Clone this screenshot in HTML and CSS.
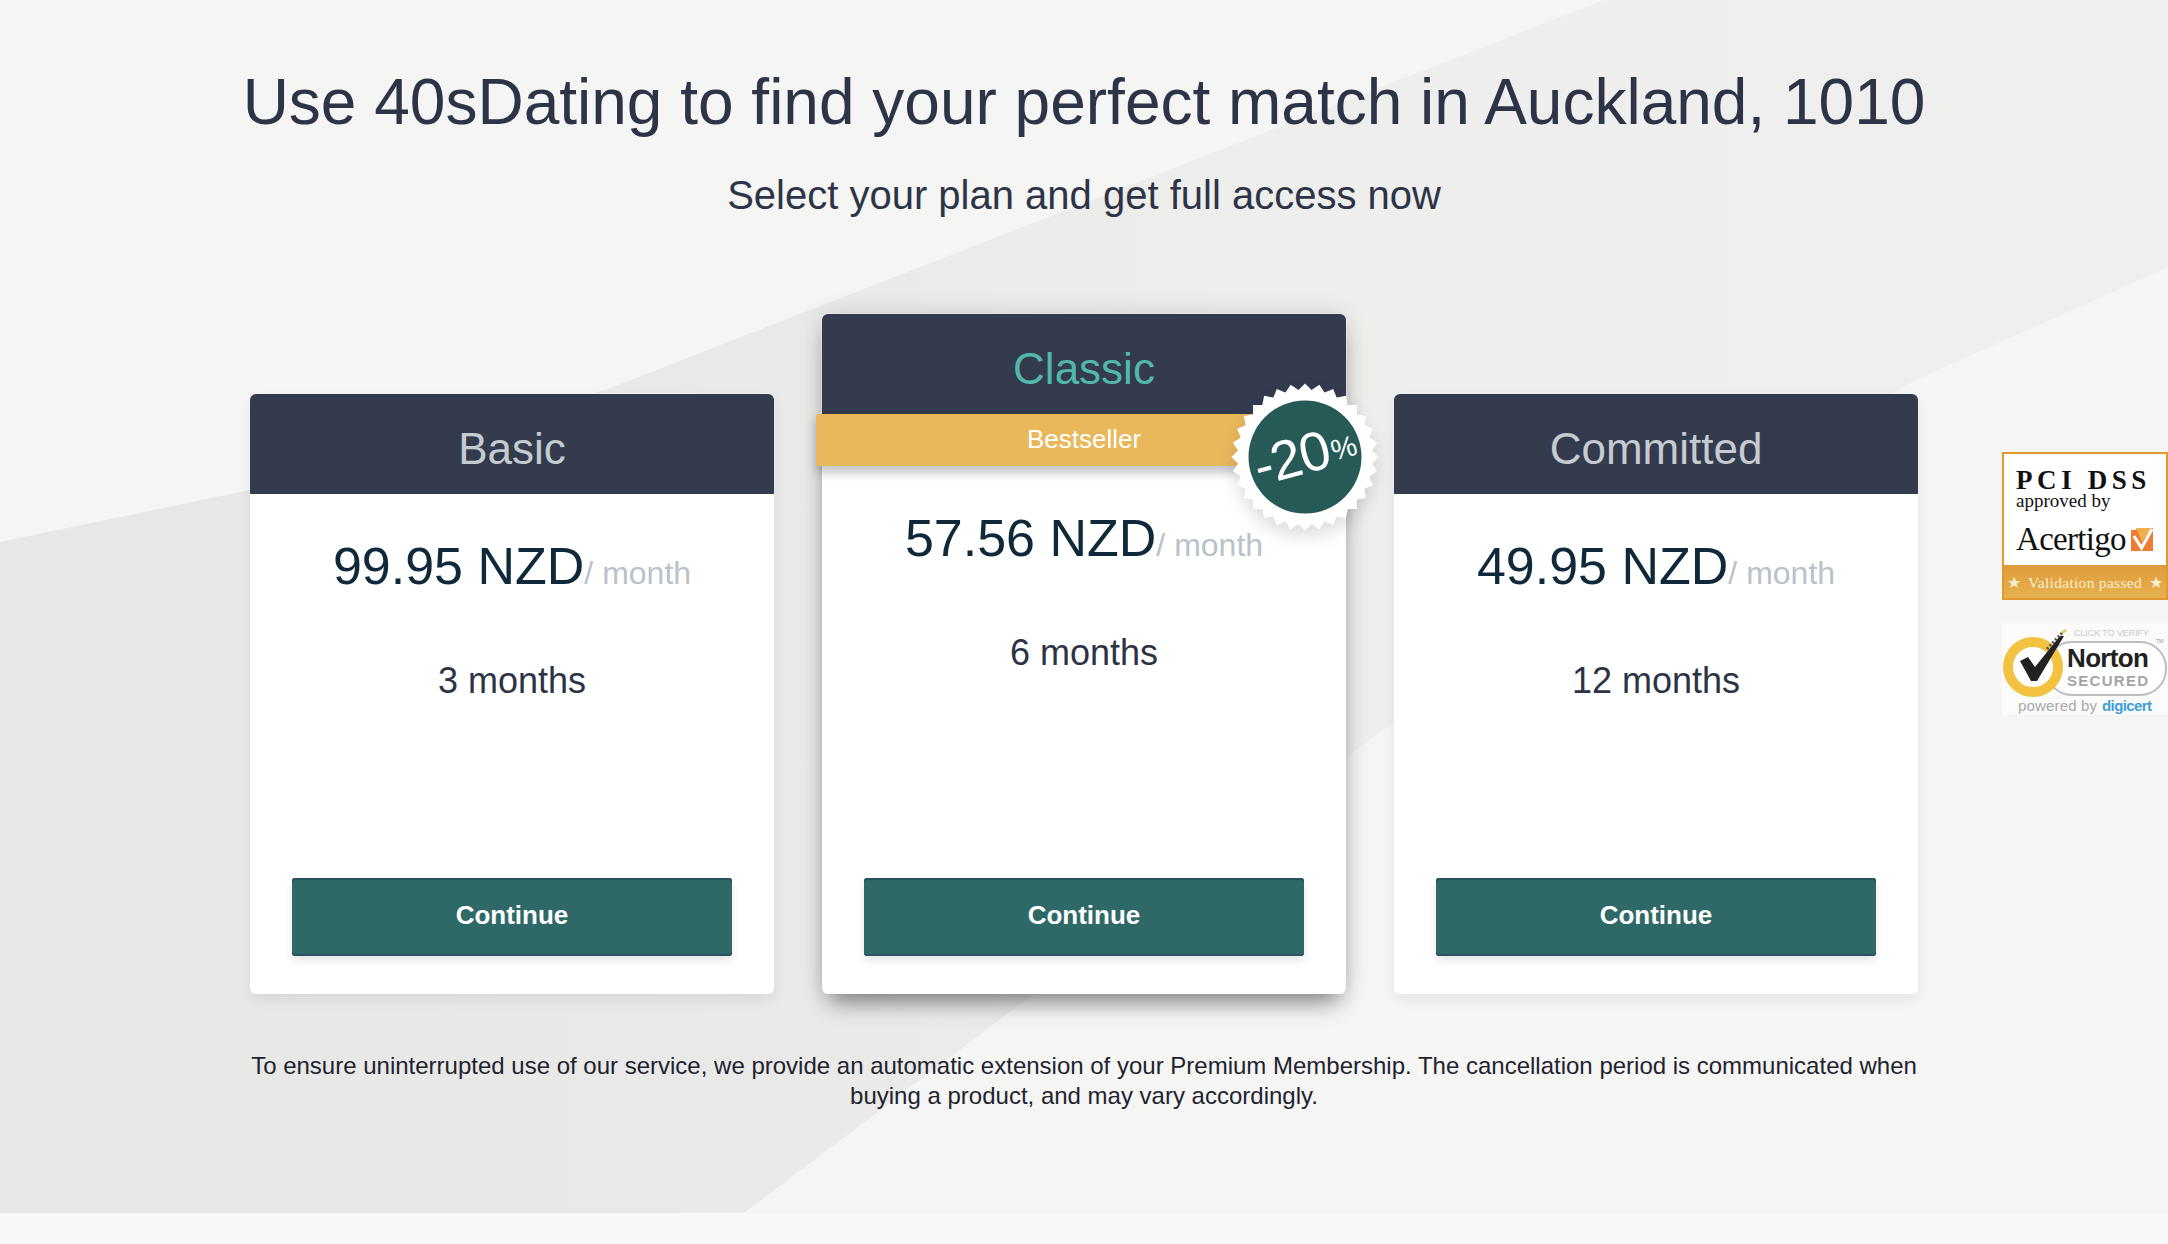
FILE: index.html
```html
<!DOCTYPE html>
<html lang="en">
<head>
<meta charset="utf-8">
<title>40sDating plans</title>
<link rel="stylesheet" href="styles.css">
</head>
<body>
<div class="hero">
  <main class="main">
    <h1 class="title">Use 40sDating to find your perfect match in Auckland, 1010</h1>
    <p class="subtitle">Select your plan and get full access now</p>
    <div class="plans">
      <section class="card">
        <header class="card-head"><h2 class="plan-name">Basic</h2></header>
        <div class="card-body">
          <p class="price"><span class="amount">99.95 NZD</span><span class="per">/ month</span></p>
          <p class="term">3 months</p>
          <button class="cta">Continue</button>
        </div>
      </section>
      <section class="card card-featured">
        <header class="card-head"><h2 class="plan-name plan-name-featured">Classic</h2></header>
        <div class="ribbon">Bestseller</div>
        <div class="burst">
          <svg class="burst-art" viewBox="-74 -74 148 148" aria-hidden="true">
            <g fill="#fff">
              <rect x="-52" y="-52" width="104" height="104"/>
              <rect x="-52" y="-52" width="104" height="104" transform="rotate(11.25)"/>
              <rect x="-52" y="-52" width="104" height="104" transform="rotate(22.5)"/>
              <rect x="-52" y="-52" width="104" height="104" transform="rotate(33.75)"/>
              <rect x="-52" y="-52" width="104" height="104" transform="rotate(45)"/>
              <rect x="-52" y="-52" width="104" height="104" transform="rotate(56.25)"/>
              <rect x="-52" y="-52" width="104" height="104" transform="rotate(67.5)"/>
              <rect x="-52" y="-52" width="104" height="104" transform="rotate(78.75)"/>
            </g>
            <circle r="56.5" fill="#265a56"/>
          </svg>
          <span class="burst-text">-20<small class="burst-pct">%</small></span>
        </div>
        <div class="card-body">
          <p class="price"><span class="amount">57.56 NZD</span><span class="per">/ month</span></p>
          <p class="term">6 months</p>
          <button class="cta">Continue</button>
        </div>
      </section>
      <section class="card">
        <header class="card-head"><h2 class="plan-name">Committed</h2></header>
        <div class="card-body">
          <p class="price"><span class="amount">49.95 NZD</span><span class="per">/ month</span></p>
          <p class="term">12 months</p>
          <button class="cta">Continue</button>
        </div>
      </section>
    </div>
    <p class="note">To ensure uninterrupted use of our service, we provide an automatic extension of your Premium Membership. The cancellation period is communicated when buying a product, and may vary accordingly.</p>
  </main>
  <aside class="seals">
    <div class="pci">
      <div class="pci-body">
        <div class="pci-title">PCI DSS</div>
        <div class="pci-by">approved by</div>
        <div class="pci-brand">
          <span>Acertigo</span>
          <svg class="pci-mark" viewBox="0 0 22 23" aria-hidden="true">
            <path d="M0 0H22L11 17L5 6V0Z" fill="#f0b04a"/>
            <path d="M0 2H6L11 14L20 0H22V23H0Z" fill="#ee7d33"/>
            <path d="M3 8L10.500 20L21 1" fill="none" stroke="#fff" stroke-width="3.200"/>
          </svg>
        </div>
      </div>
      <div class="pci-foot"><span>★</span><span>Validation passed</span><span>★</span></div>
    </div>
    <svg class="norton" viewBox="0 0 166 92">
      <rect x="44" y="19" width="120" height="53" rx="26" fill="#fff" stroke="#bdbdbd" stroke-width="2"/>
      <text class="n-click" x="72" y="13" textLength="75">CLICK TO VERIFY</text>
      <text class="n-tm" x="154" y="20">TM</text>
      <circle cx="31" cy="44" r="25" fill="#fff" stroke="#f3c241" stroke-width="10"/>
      <path d="M18 38L26 34L33 44L58 13L62 13L35 58L29 58Z" fill="#222"/>
      <path d="M45 26L60 10" fill="none" stroke="#555" stroke-width="3" stroke-dasharray="2 2"/>
      <path d="M60 10L64 7" fill="none" stroke="#e9c24e" stroke-width="2.500"/>
      <text class="n-name" x="65" y="44" textLength="82">Norton</text>
      <text class="n-sec" x="65" y="63" textLength="81">SECURED</text>
      <text class="n-pow" x="16" y="88" textLength="79">powered by</text>
      <text class="n-digi" x="100" y="88" textLength="50">digicert</text>
    </svg>
  </aside>
</div>
<div class="strip"></div>
</body>
</html>
```
FILE: styles.css
```css
* { box-sizing: border-box; }
html, body { margin: 0; padding: 0; }
body { font-family: "Liberation Sans", Arial, sans-serif; background: #f7f9f8; color: #2c3345; height: 1244px; overflow: hidden; }
h1, h2, p { margin: 0; font-weight: 400; }

.hero {
  position: relative;
  isolation: isolate;
  height: 1213px;
  background: #f5f5f3;
  display: grid;
  grid-template-columns: 1fr 1668px 1fr;
}
.hero::before {
  content: "";
  position: absolute;
  inset: 0;
  z-index: -1;
  background: linear-gradient(90deg, #e7e7e6, #e9e9e8 35%, #eeeeec 60%, #efefed);
  clip-path: polygon(0 542px, 250px 490px, 608px 389px, 1604px 0, 100% 0, 100% 267px, 1909px 383px, 1383px 730px, 744px 1213px, 0 1213px);
}
.main { grid-column: 2; padding-top: 67px; }
.title { font-size: 64px; line-height: 70px; text-align: center; color: #2d3447; margin: 0 -20px; white-space: nowrap; }
.subtitle { font-size: 40px; line-height: 46px; text-align: center; color: #2d3447; margin-top: 35px; }

.plans { display: flex; gap: 48px; align-items: flex-end; margin-top: 96px; height: 680px; }
.card {
  position: relative;
  flex: 1 1 0;
  height: 600px;
  background: #fff;
  border-radius: 6px;
  display: flex;
  flex-direction: column;
  box-shadow: 0 6px 14px rgba(0, 0, 0, .07);
}
.card-featured {
  height: 680px;
  box-shadow: 0 16px 22px -8px rgba(0, 0, 0, .42), 0 0 24px rgba(0, 0, 0, .14);
}
.card-head {
  height: 100px;
  flex: none;
  background: #343b4e;
  border-radius: 6px 6px 0 0;
  display: flex;
  align-items: center;
  justify-content: center;
  box-shadow: 0 0 2px #fff;
}
.card-featured .card-head { align-items: flex-start; padding-top: 27px; }
.plan-name { font-size: 44px; line-height: 56px; color: #c6cbd1; padding-top: 9px; }
.card-featured .plan-name { padding-top: 0; }
.plan-name-featured { color: #52b9aa; }
.ribbon {
  flex: none;
  height: 52px;
  margin: 0 -6px;
  background: #e9b85b;
  border-radius: 2px;
  color: #fff;
  font-size: 26px;
  line-height: 50px;
  text-align: center;
  box-shadow: 0 7px 10px rgba(40, 50, 70, .28);
}
.card-body { flex: 1; display: flex; flex-direction: column; align-items: center; padding: 42px 42px 38px; }
.price { line-height: 60px; white-space: nowrap; }
.amount { font-size: 52px; color: #10293a; }
.per { font-size: 32px; color: #b9c2c9; }
.term { font-size: 36px; line-height: 40px; margin-top: 52px; color: #2c3345; }
.cta {
  margin-top: auto;
  width: 100%;
  height: 78px;
  border: 0;
  border-radius: 3px;
  background: #2e6967;
  color: #fff;
  font: 700 26px "Liberation Sans", Arial, sans-serif;
  padding-bottom: 4px;
  box-shadow: inset 0 2px 0 #23545a, inset 0 -2px 0 #2b5463, 0 5px 9px rgba(0, 0, 0, .1);
}

.burst { position: absolute; left: 409px; top: 69px; width: 148px; height: 148px; display: flex; align-items: center; justify-content: center; }
.burst-art { position: absolute; inset: 0; width: 100%; height: 100%; filter: drop-shadow(0 9px 8px rgba(0, 0, 0, .13)); }
.burst-text { position: relative; color: #fff; font-size: 55px; line-height: 1; letter-spacing: -1px; transform: rotate(-15deg); margin-top: -5px; white-space: nowrap; }
.burst-pct { font-size: 29px; vertical-align: 5px; letter-spacing: 0; margin-left: 2px; }

.note { font-size: 24px; line-height: 30px; text-align: center; color: #1f2330; margin-top: 57px; }

.seals { grid-column: 3; justify-self: end; width: 166px; padding-top: 452px; display: flex; flex-direction: column; gap: 23px; font-family: "Liberation Serif", serif; }
.pci { height: 148px; border: 2px solid #e2972f; background: #fff; display: flex; flex-direction: column; }
.pci-body { flex: 1; padding: 14px 0 0 12px; color: #111; }
.pci-title { font-size: 27px; line-height: 24px; font-weight: 700; letter-spacing: 4.6px; white-space: nowrap; }
.pci-by { font-size: 19px; line-height: 18px; white-space: nowrap; }
.pci-brand { display: flex; align-items: center; gap: 5px; margin-top: 11px; font-size: 33px; line-height: 36px; letter-spacing: -.7px; }
.pci-mark { width: 22px; height: 23px; flex: none; }
.pci-foot { height: 33px; flex: none; padding: 3px 3px 0; background: linear-gradient(#e09b39, #e6b14f); color: #fcefd0; font-size: 15.5px; display: flex; align-items: center; justify-content: space-between; white-space: nowrap; letter-spacing: .3px; }
.norton { width: 166px; height: 92px; background: #fbfbfa; display: block; font-family: "Liberation Sans", Arial, sans-serif; }
.n-click { font-size: 9px; fill: #c9c9c9; }
.n-tm { font-size: 5px; fill: #999; }
.n-name { font-size: 26px; font-weight: 700; fill: #222; }
.n-sec { font-size: 15px; font-weight: 700; fill: #a5a5a5; }
.n-pow { font-size: 15px; fill: #a9a9a9; }
.n-digi { font-size: 15px; font-weight: 700; fill: #3f9fd8; }

.strip { height: 31px; background: #f7f9f8; }
```
